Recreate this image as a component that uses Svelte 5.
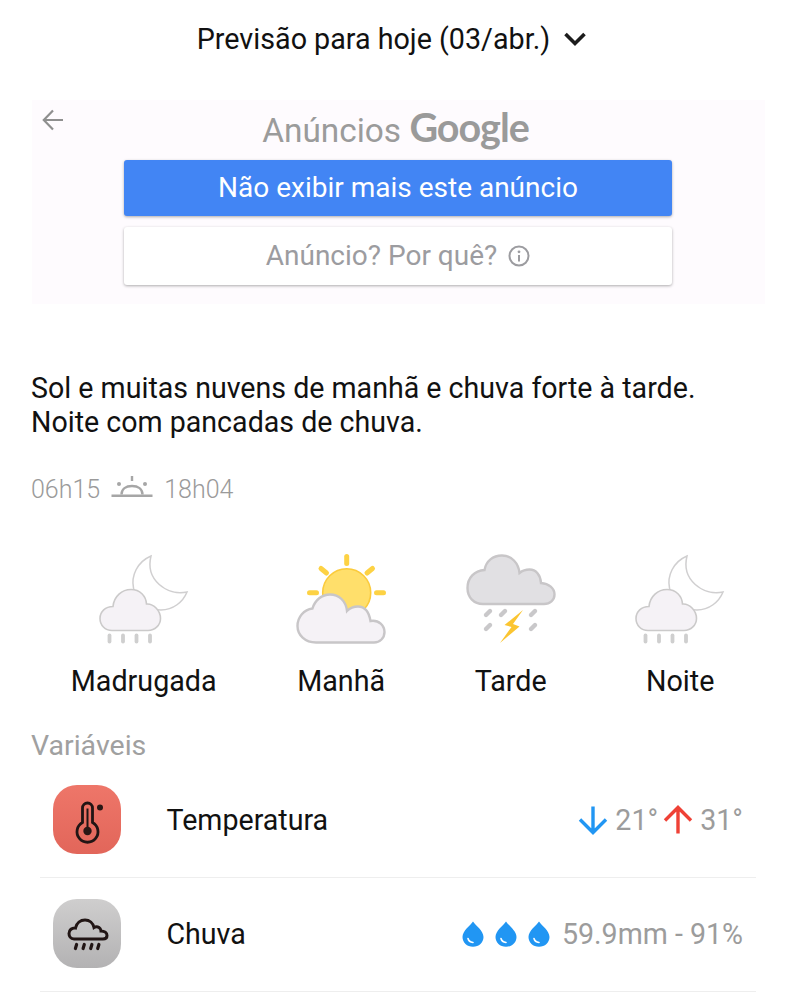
<script>
  const periods = [
    { name: "Madrugada", icon: "moon" },
    { name: "Manhã", icon: "sun" },
    { name: "Tarde", icon: "storm" },
    { name: "Noite", icon: "moon" },
  ];
  const rays = [
    [50.7, 2.5, 50.7, 9.5],
    [25, 14.5, 30.5, 19],
    [76.5, 14.5, 71, 19],
    [13.5, 38.7, 20.5, 38.7],
    [80.5, 38.7, 87.5, 38.7],
  ];
  const streaks = [[22, 59], [37, 59], [67, 59], [22, 73], [67, 73]];
</script>

{#snippet moonIcon()}
  <svg class="wx" viewBox="0 0 90 92">
    <path class="moon" d="M52 2C38 8 32 22 34.5 34C37 50 48 56 62 56C74 56 84 48 88 38C68 42 46 26 52 2Z" />
    <path class="cloud" d="M13 76.5C6 76.5 1 71 1 64.5C1 57.5 6.5 52.5 14 52.5C15 42 23 35.5 32 35.5C41 35.5 47 42 47.5 50C55 49.5 61.5 57 61.5 64.5C61.5 71 56 76.5 49 76.5Z" />
    {#each [10.5, 24, 37.5, 51] as x}
      <line class="drip" x1={x} y1="81.5" x2={x} y2="87.5" />
    {/each}
  </svg>
{/snippet}

{#snippet sunIcon()}
  <svg class="wx" viewBox="0 0 90 92">
    {#each rays as r}
      <line class="ray" x1={r[0]} y1={r[1]} x2={r[2]} y2={r[3]} />
    {/each}
    <circle class="sun" cx="50.7" cy="38.7" r="24" />
    <path class="cloud thick" d="M20 88.5C9 88.5 1.5 81 1.5 72C1.5 63 8 55.5 16.5 54.5C19 46 26 40.5 34 40.5C43 40.5 50 47 51 57C54 54 58 52.5 62 52.5C69 52.5 73 58 74.5 67C83 65.5 88.5 72 88.5 78C88.5 84 84 88.5 78 88.5Z" />
  </svg>
{/snippet}

{#snippet stormIcon()}
  <svg class="wx" viewBox="0 0 90 92">
    <path class="cloud thick dark" d="M17 50C8 50 1.5 43.5 1.5 34C1.5 24 8.5 16.5 18.5 16C20 7 27 1.5 36 1.5C45.5 1.5 52.5 9 53.5 19C56 17 59.5 15.5 63.5 15.5C70 15.5 74.5 21 75 29C83 29.5 88.5 34.5 88.5 40.5C88.5 46 84 50 78 50Z" />
    {#each streaks as s}
      <line class="streak" x1={s[0] - 2} y1={s[1] + 2} x2={s[0] + 2} y2={s[1] - 2} />
    {/each}
    <path class="bolt" d="M57 56L38.5 71L45.5 73L34 89L53.5 72.5L47 70Z" />
  </svg>
{/snippet}

{#snippet drop()}
  <svg class="drop" viewBox="0 0 22 26">
    <path fill="#2196f3" d="M11 0.5C8.5 4.5 0.5 9.5 0.5 16C0.5 21.5 5 25.8 11 25.8C17 25.8 21.5 21.5 21.5 16C21.5 9.5 13.5 4.5 11 0.5Z" />
    <path fill="none" stroke="#fff" stroke-width="1.6" stroke-linecap="round" d="M6 17.5C6.5 19.8 8.5 21.2 11 21.5" />
  </svg>
{/snippet}

<div class="page">
  <header class="top">
    <span>Previsão para hoje (03/abr.)</span>
    <svg class="chev" viewBox="0 0 24 16">
      <path d="M2.5 3L12 12.5L21.5 3" />
    </svg>
  </header>

  <section class="ad">
    <svg class="back" viewBox="0 0 22 22">
      <path d="M21 11H2M11 1.5L1.8 11L11 20.5" />
    </svg>
    <div class="ad-title">Anúncios <b>Google</b></div>
    <div class="ad-btn primary">Não exibir mais este anúncio</div>
    <div class="ad-btn">
      Anúncio? Por quê?
      <svg class="info" viewBox="0 0 22 22">
        <circle cx="11" cy="11" r="9.5" />
        <path d="M11 10V16.5" />
        <circle class="dot" cx="11" cy="6.8" r="1.4" />
      </svg>
    </div>
  </section>

  <p class="summary">Sol e muitas nuvens de manhã e chuva forte à tarde.<br />Noite com pancadas de chuva.</p>

  <div class="sun-times">
    <span>06h15</span>
    <svg class="sunrise" viewBox="0 0 42 24">
      <path class="fill" d="M0.5 20.5H41.5V23H0.5ZM19.8 2H22.2V7H19.8Z" />
      <path d="M10.5 20.5C10.5 15 15 12 21 12C27 12 31.5 15 31.5 20.5" />
      <circle class="fill" cx="8" cy="10" r="2" />
      <circle class="fill" cx="34" cy="10" r="2" />
    </svg>
    <span>18h04</span>
  </div>

  <div class="periods">
    {#each periods as p}
      <div class="period">
        {#if p.icon === "moon"}
          {@render moonIcon()}
        {:else if p.icon === "sun"}
          {@render sunIcon()}
        {:else}
          {@render stormIcon()}
        {/if}
        <span>{p.name}</span>
      </div>
    {/each}
  </div>

  <h2 class="vars">Variáveis</h2>

  <div class="rows">
    <div class="row">
      <div class="tile red">
        <svg viewBox="0 0 68 68">
          <path class="th" d="M29.5 37V22.5a5 5 0 0 1 10 0V37a10.5 10.5 0 1 1 -10 0Z" />
          <path class="th thin" d="M34.5 23V44" />
          <circle cx="34.5" cy="45.5" r="4.2" fill="#2a1715" />
          <circle cx="47" cy="22" r="3" fill="#2a1715" />
        </svg>
      </div>
      <span class="label">Temperatura</span>
      <div class="vals">
        <svg class="arrow" viewBox="0 0 30 30"><path stroke="#2196f3" d="M15 1.5V27M2 14.5L15 27.5L28 14.5" /></svg>
        <span class="tight">21°</span>
        <svg class="arrow" viewBox="0 0 30 30"><path stroke="#ef4136" d="M15 28.5V3M2 15.5L15 2.5L28 15.5" /></svg>
        <span>31°</span>
      </div>
    </div>
    <div class="row">
      <div class="tile grey">
        <svg viewBox="0 0 68 68">
          <path class="th bold" d="M21 39.5C17.5 39.5 16 36.5 16 34C16 30.5 19 28 22.5 28.5C23.5 23.5 27.5 20.5 32 20.5C36.5 20.5 40 23.5 41 28C42.5 27 44.5 27 46 28C47.5 29 48 30.5 48 31.5C51.5 31.5 54 33.5 54 36C54 38 52.5 39.5 50 39.5Z" />
          {#each [23, 30.7, 38.3, 45.3] as x}
            <path class="th rain" d="M{x + 0.6} 45L{x - 0.6} 49" />
          {/each}
        </svg>
      </div>
      <span class="label">Chuva</span>
      <div class="vals">
        <div class="drops">
          {@render drop()}
          {@render drop()}
          {@render drop()}
        </div>
        <span>59.9mm - 91%</span>
      </div>
    </div>
  </div>
</div>

<style>
  :global(body) {
    background: #fff;
  }

  .page {
    width: 796px;
    height: 1000px;
    overflow: hidden;
    font-family: Roboto, "Liberation Sans", sans-serif;
    color: #111;
  }

  .top {
    height: 78px;
    padding: 0 12px 2px 0;
    display: flex;
    align-items: center;
    justify-content: center;
    gap: 13px;
    font-size: 28.7px;
    color: #111;
  }

  .chev {
    width: 24px;
    height: 16px;
    fill: none;
    stroke: #1c1c1c;
    stroke-width: 3.6;
  }

  .ad {
    position: relative;
    height: 204px;
    margin: 20px 31px 0 32px;
    padding-right: 1px;
    background: #fefbfe;
    display: flex;
    flex-direction: column;
    align-items: center;
  }

  .back {
    position: absolute;
    left: 10px;
    top: 9px;
    width: 22px;
    height: 22px;
    fill: none;
    stroke: #8f8f8f;
    stroke-width: 2.2;
  }

  .ad-title {
    height: 60px;
    padding-right: 5px;
    line-height: 53px;
    font-size: 33.4px;
    color: #9b9b9b;
  }

  .ad-title b {
    font-family: Lato, Roboto, sans-serif;
    font-weight: 700;
    font-size: 39.5px;
    color: #9a9a9a;
    letter-spacing: -1px;
  }

  .ad-btn {
    width: 548px;
    height: 58px;
    margin-bottom: 11px;
    padding-bottom: 2px;
    box-sizing: border-box;
    display: flex;
    align-items: center;
    justify-content: center;
    gap: 11px;
    border-radius: 3px;
    background: #fff;
    color: #9c9ca0;
    font-size: 28px;
    box-shadow: 0 1px 3px rgba(0, 0, 0, 0.32);
  }

  .ad-btn.primary {
    height: 56px;
    background: #4285f4;
    color: #fff;
    font-size: 28px;
  }

  .info {
    width: 22px;
    height: 22px;
    margin-top: 2px;
    fill: none;
    stroke: #9c9ca0;
    stroke-width: 2;
  }

  .info .dot {
    fill: #9c9ca0;
    stroke: none;
  }

  .summary {
    margin: 67px 0 0 31px;
    font-size: 28.6px;
    line-height: 34px;
    color: #111;
  }

  .sun-times {
    margin: 35px 0 0 31px;
    height: 30px;
    display: flex;
    align-items: center;
    gap: 11px;
    font-size: 25px;
    font-weight: 300;
    color: #9a9a9a;
  }

  .sunrise {
    width: 42px;
    height: 24px;
    margin-bottom: 6px;
    fill: none;
    stroke: #a6a6a6;
    stroke-width: 2.4;
  }

  .sunrise .fill {
    fill: #a6a6a6;
    stroke: none;
  }

  .periods {
    margin: 50px 31px 0;
    display: flex;
    justify-content: space-around;
  }

  .period {
    min-width: 90px;
    display: flex;
    flex-direction: column;
    align-items: center;
    gap: 19px;
    font-size: 28.7px;
    line-height: 32px;
    color: #111;
  }

  .wx {
    display: block;
    width: 90px;
    height: 92px;
  }

  .moon {
    fill: #fff;
    stroke: #d0cfd0;
    stroke-width: 1.5;
  }

  .cloud {
    fill: #f5f2f6;
    stroke: #cbcaca;
    stroke-width: 1.6;
  }

  .cloud.thick {
    stroke: #c8c6c8;
    stroke-width: 2.4;
  }

  .cloud.dark {
    fill: #e1e0e3;
  }

  .drip {
    stroke: #cfcfcf;
    stroke-width: 3.8;
    stroke-linecap: round;
  }

  .ray {
    stroke: #fdd244;
    stroke-width: 5;
    stroke-linecap: round;
  }

  .sun {
    fill: #ffdf6b;
    stroke: #fbcb3c;
    stroke-width: 1.6;
  }

  .streak {
    stroke: #c9c8ca;
    stroke-width: 4.4;
    stroke-linecap: round;
  }

  .bolt {
    fill: #fbc531;
  }

  .vars {
    margin: 33px 0 0 31px;
    font-size: 28.5px;
    line-height: 32px;
    font-weight: 400;
    color: #a0a0a0;
  }

  .rows {
    margin: 2px 40px 0;
  }

  .row {
    height: 114px;
    box-sizing: border-box;
    padding: 0 13px 2px;
    display: flex;
    align-items: center;
    border-bottom: 1px solid #eeeeee;
  }

  .tile {
    width: 68px;
    height: 69px;
    border-radius: 24px;
    flex: none;
  }

  .tile svg {
    display: block;
    width: 68px;
    height: 69px;
  }

  .tile.red {
    background: linear-gradient(#ee7669, #e2665a);
  }

  .tile.grey {
    background: linear-gradient(#cfcece, #b3b2b3);
  }

  .th {
    fill: none;
    stroke: #211514;
    stroke-width: 2.8;
  }

  .th.thin {
    stroke-width: 2;
  }

  .th.bold {
    stroke-width: 3;
  }

  .th.rain {
    stroke-width: 3.2;
    stroke-linecap: round;
  }

  .label {
    margin-left: 45.5px;
    font-size: 28.6px;
    color: #111;
  }

  .vals {
    margin-left: auto;
    display: flex;
    align-items: center;
    gap: 7px;
    font-size: 28.6px;
    color: #9c9c9c;
  }

  .tight {
    margin-right: -2px;
  }

  .arrow {
    width: 30px;
    height: 30px;
    fill: none;
    stroke-width: 3.4;
  }

  .drops {
    display: flex;
    gap: 11px;
    margin-right: 5px;
  }

  .drop {
    display: block;
    width: 22px;
    height: 26px;
  }
</style>
